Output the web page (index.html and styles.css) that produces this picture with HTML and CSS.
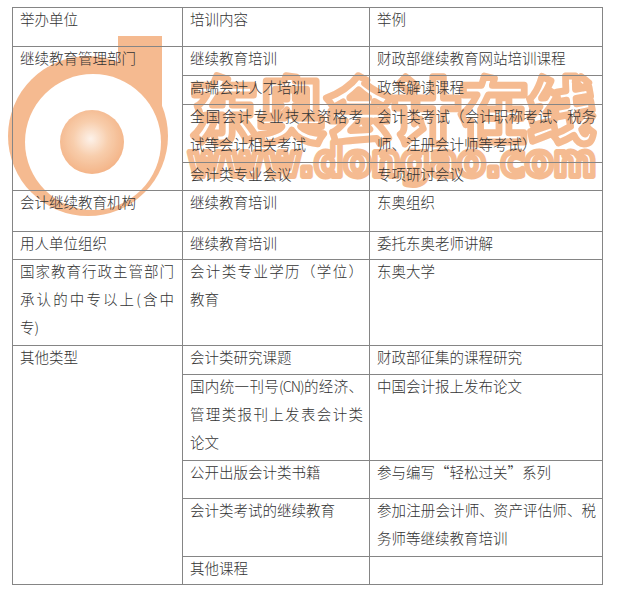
FILE: index.html
```html
<!DOCTYPE html>
<html lang="zh-CN">
<head>
<meta charset="utf-8">
<title>会计继续教育形式</title>
<link rel="stylesheet" href="styles.css">
</head>
<body>
<div class="page">
  <svg class="watermark" width="618" height="591" viewBox="0 0 618 591" aria-hidden="true">
    <defs>
      <radialGradient id="ball" cx="0.48" cy="0.45" r="0.55">
        <stop offset="0" stop-color="#fdf1e8"/>
        <stop offset="0.5" stop-color="#f8c9a4"/>
        <stop offset="1" stop-color="#f3ad7c"/>
      </radialGradient>
    </defs>
    <g class="logo">
      <circle cx="88" cy="136" r="80" fill="#f5b384"/>
      <rect x="118" y="36" width="44" height="110" fill="#f5b384"/>
      <circle cx="93" cy="142" r="68" fill="#ffffff"/>
      <circle cx="92" cy="142" r="32" fill="url(#ball)"/>
    </g>
    <text class="wm-cn" x="190" y="137" textLength="405" lengthAdjust="spacingAndGlyphs">东奥会计在线</text>
    <text class="wm-en" x="188" y="176" textLength="408" lengthAdjust="spacingAndGlyphs">www.dongao.com</text>
  </svg>
  <table class="grid">
    <colgroup><col class="c1"><col class="c2"><col class="c3"></colgroup>
    <tr class="h39"><td><div class="t">举办单位</div></td><td><div class="t">培训内容</div></td><td><div class="t">举例</div></td></tr>
    <tr class="h29"><td rowspan="4"><div class="t">继续教育管理部门</div></td><td><div class="t">继续教育培训</div></td><td><div class="t">财政部继续教育网站培训课程</div></td></tr>
    <tr class="h29"><td><div class="t">高端会计人才培训</div></td><td><div class="t">政策解读课程</div></td></tr>
    <tr class="h58"><td><div class="t">全国会计专业技术资格考试等会计相关考试</div></td><td><div class="t">会计类考试（会计职称考试、税务师、注册会计师等考试）</div></td></tr>
    <tr class="h28"><td><div class="t">会计类专业会议</div></td><td><div class="t">专项研讨会议</div></td></tr>
    <tr class="h41"><td><div class="t">会计继续教育机构</div></td><td><div class="t">继续教育培训</div></td><td><div class="t">东奥组织</div></td></tr>
    <tr class="h28"><td><div class="t">用人单位组织</div></td><td><div class="t">继续教育培训</div></td><td><div class="t">委托东奥老师讲解</div></td></tr>
    <tr class="h86"><td class="first"><div class="t">国家教育行政主管部门承认的中专以上(含中专)</div></td><td><div class="t">会计类专业学历（学位）教育</div></td><td><div class="t">东奥大学</div></td></tr>
    <tr class="h29"><td rowspan="5"><div class="t">其他类型</div></td><td><div class="t">会计类研究课题</div></td><td><div class="t">财政部征集的课程研究</div></td></tr>
    <tr class="h86"><td><div class="t">国内统一刊号<span class="latin">(CN)</span>的经济、管理类报刊上发表会计类论文</div></td><td><div class="t">中国会计报上发布论文</div></td></tr>
    <tr class="h38"><td><div class="t">公开出版会计类书籍</div></td><td><div class="t">参与编写“轻松过关”系列</div></td></tr>
    <tr class="h58"><td><div class="t">会计类考试的继续教育</div></td><td><div class="t">参加注册会计师、资产评估师、税务师等继续教育培训</div></td></tr>
    <tr class="h28"><td><div class="t">其他课程</div></td><td></td></tr>
  </table>
</div>
</body>
</html>
```

FILE: styles.css
```css
html, body {
  margin: 0;
  padding: 0;
  background: #ffffff;
}

.page {
  position: relative;
  width: 618px;
  height: 591px;
  box-sizing: border-box;
  padding: 7px 0 0 12px;
  overflow: hidden;
}

.watermark {
  position: absolute;
  left: 0;
  top: 0;
  z-index: 0;
  opacity: 0.9;
}

.wm-cn {
  font-family: "Noto Sans CJK SC", sans-serif;
  font-weight: 900;
  font-size: 70px;
  fill: #ffffff;
  stroke: #f5b486;
  stroke-width: 7px;
  stroke-linejoin: round;
}

.wm-en {
  font-family: "DejaVu Sans", sans-serif;
  font-weight: 700;
  font-size: 44px;
  fill: #ffffff;
  stroke: #f5b486;
  stroke-width: 6px;
  stroke-linejoin: round;
}

.grid {
  position: relative;
  z-index: 1;
  border-collapse: collapse;
  table-layout: fixed;
  width: 590px;
  background: transparent;
  font-family: "Noto Sans CJK SC", sans-serif;
  font-weight: 300;
  font-size: 14.5px;
  color: #333333;
}

.c1 { width: 170px; }
.c2 { width: 187px; }
.c3 { width: 233px; }

.grid td {
  border: 1.5px solid #858585;
  padding: 0 6px 0 7px;
  vertical-align: top;
  text-align: justify;
  line-height: 28px;
}

.grid td.first {
  padding-right: 8px;
}

.t {
  margin-top: -3px;
}

.latin {
  letter-spacing: -1px;
}

.h28 { height: 28px; }
.h29 { height: 29px; }
.h38 { height: 38px; }
.h39 { height: 39px; }
.h41 { height: 41px; }
.h58 { height: 58px; }
.h86 { height: 86px; }
```
